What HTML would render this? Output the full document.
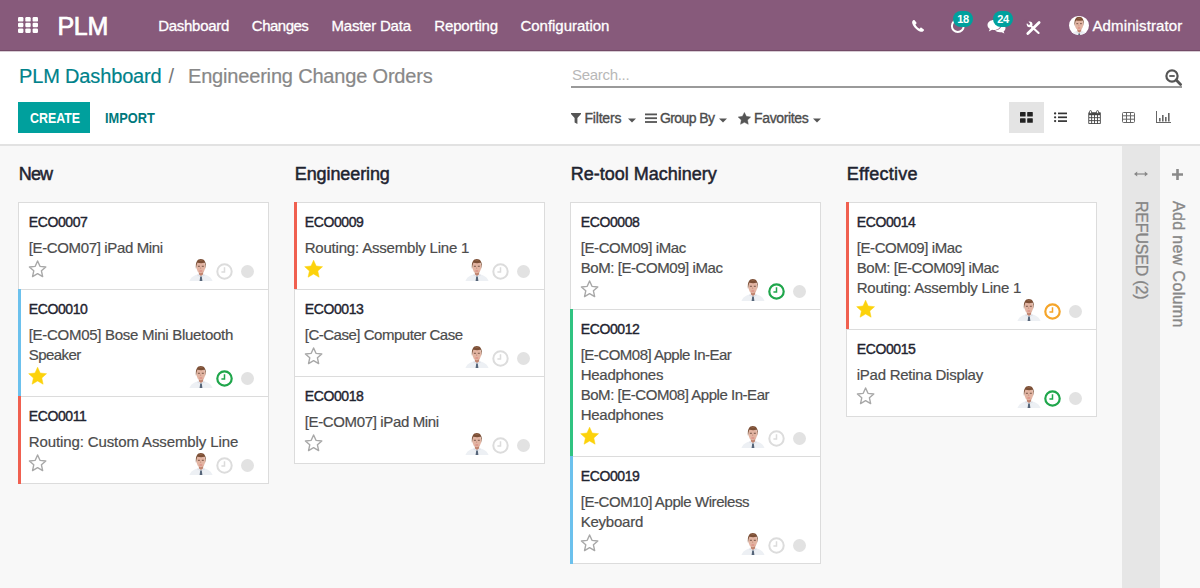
<!DOCTYPE html>
<html><head><meta charset="utf-8">
<style>
*{box-sizing:border-box;margin:0;padding:0}
html,body{width:1200px;height:588px;overflow:hidden;font-family:"Liberation Sans",sans-serif;background:#f8f8f8;position:relative}
.a{position:absolute;white-space:nowrap}
svg{position:absolute;overflow:visible}
</style></head><body>
<svg width="0" height="0" style="position:absolute">
<defs>
<symbol id="av" viewBox="0 0 24 23">
  <path d="M0.5,23 C1.5,19.5 5,17.2 9,16.2 L15,16.2 C19,17.2 22.5,19.5 23.5,23 Z" fill="#edf0f4"/>
  <path d="M9,16.2 L12,18.5 L15,16.2 L16,17.2 L12,19.5 L8,17.2 Z" fill="#dde1e8"/>
  <path d="M11.2,18.6 L12.8,18.6 L13.4,23 L10.6,23 Z" fill="#566579"/>
  <path d="M9.6,13 L14.4,13 L14,16.4 L12,18 L10,16.4 Z" fill="#c0846f"/>
  <ellipse cx="11.8" cy="9" rx="4.4" ry="6.2" fill="#e2b4a2"/>
  <path d="M7,11 C6.2,4 8.4,0.9 11.8,0.9 C15.4,0.9 17.6,4 16.8,11 C16.5,8 16.2,6 15.4,4.8 C13.4,5.4 10.4,5.3 8.6,4.8 C7.8,6 7.4,8 7,11 Z" fill="#7c4f36"/>
  <path d="M9.4,2.6 C10.8,1.8 13.2,1.8 14.6,2.8 C13.2,2.6 11,2.6 9.4,2.6 Z" fill="#a87a5c"/>
  <rect x="8.9" y="7.8" width="2" height="0.9" fill="#6a4a3e"/><rect x="12.8" y="7.8" width="2" height="0.9" fill="#6a4a3e"/>
  <path d="M11.4,8.5 L11,11 L12.4,11 Z" fill="#cf9a88"/>
  <rect x="10.3" y="12.4" width="3" height="1" rx="0.5" fill="#d9807a"/>
</symbol>
</defs></svg>

<div class="a" style="left:0;top:0;width:1200px;height:51px;background:#875a7b"></div>
<div class="a" style="left:0;top:50px;width:1200px;height:1px;background:#724a66"></div>
<div class="a" style="left:0;top:51px;width:1200px;height:1px;background:#d8ccd4"></div>
<svg style="left:18px;top:17px" width="20" height="16"><rect x="0.0" y="0.0" width="5.4" height="4.6" rx="1.2" fill="#fff"/><rect x="7.3" y="0.0" width="5.4" height="4.6" rx="1.2" fill="#fff"/><rect x="14.6" y="0.0" width="5.4" height="4.6" rx="1.2" fill="#fff"/><rect x="0.0" y="5.7" width="5.4" height="4.6" rx="1.2" fill="#fff"/><rect x="7.3" y="5.7" width="5.4" height="4.6" rx="1.2" fill="#fff"/><rect x="14.6" y="5.7" width="5.4" height="4.6" rx="1.2" fill="#fff"/><rect x="0.0" y="11.4" width="5.4" height="4.6" rx="1.2" fill="#fff"/><rect x="7.3" y="11.4" width="5.4" height="4.6" rx="1.2" fill="#fff"/><rect x="14.6" y="11.4" width="5.4" height="4.6" rx="1.2" fill="#fff"/></svg>
<div class="a" style="left:57.5px;top:13.54px;font-size:25px;line-height:25px;color:#fff;font-weight:400;letter-spacing:-0.3px;-webkit-text-stroke:0.7px #fff;">PLM</div>
<div class="a" style="left:158.3px;top:18.10px;font-size:15px;line-height:15px;color:#fff;font-weight:400;letter-spacing:-0.3px;-webkit-text-stroke:0.3px #fff;">Dashboard</div>
<div class="a" style="left:251.8px;top:18.10px;font-size:15px;line-height:15px;color:#fff;font-weight:400;letter-spacing:-0.5px;-webkit-text-stroke:0.3px #fff;">Changes</div>
<div class="a" style="left:331.5px;top:18.10px;font-size:15px;line-height:15px;color:#fff;font-weight:400;letter-spacing:-0.22px;-webkit-text-stroke:0.3px #fff;">Master Data</div>
<div class="a" style="left:434.3px;top:18.10px;font-size:15px;line-height:15px;color:#fff;font-weight:400;letter-spacing:-0.15px;-webkit-text-stroke:0.3px #fff;">Reporting</div>
<div class="a" style="left:520.5px;top:18.10px;font-size:15px;line-height:15px;color:#fff;font-weight:400;letter-spacing:-0.03px;-webkit-text-stroke:0.3px #fff;">Configuration</div>
<svg style="left:912px;top:20px" width="13" height="12" viewBox="0 0 13 12"><path d="M2.6,0.3 L4.4,2.6 C4.7,3 4.6,3.5 4.2,3.8 L3.4,4.4 C4.2,6.3 5.8,7.9 7.6,8.7 L8.3,7.9 C8.6,7.5 9.1,7.4 9.5,7.7 L11.8,9.4 C12.2,9.7 12.2,10.2 11.9,10.6 L10.9,11.5 C10,12.2 8,11.9 5.6,10.2 C3.2,8.5 1.2,6 0.4,3.8 C-0.1,2.4 0.2,1.3 0.9,0.6 L1.6,0.1 C1.9,-0.1 2.3,0 2.6,0.3 Z" fill="#fff"/></svg>
<svg style="left:950px;top:19px" width="16" height="14" viewBox="0 0 16 14"><circle cx="7.8" cy="7" r="5.9" fill="none" stroke="#fff" stroke-width="2"/></svg>
<div class="a" style="left:953px;top:11px;width:20px;height:16px;border-radius:8px;background:#00a09d;color:#fff;font-size:11px;font-weight:700;line-height:16px;text-align:center;letter-spacing:-0.4px">18</div>
<svg style="left:987px;top:19px" width="19" height="15" viewBox="0 0 19 15"><path d="M7,1 C3.2,1 0.5,3.2 0.5,6 C0.5,7.6 1.4,9 2.8,9.9 L1.8,12.5 L5.2,10.8 C5.8,10.9 6.4,11 7,11 C10.8,11 13.5,8.8 13.5,6 C13.5,3.2 10.8,1 7,1 Z" fill="#fff"/><path d="M14.5,4.5 C17,5.3 18.5,7 18.5,9 C18.5,10.4 17.8,11.6 16.6,12.4 L17.4,14.6 L14.6,13.2 C14.1,13.3 13.6,13.3 13,13.3 C10.8,13.3 8.9,12.4 7.9,11.6 C11.6,11.4 14.5,8.9 14.5,5.8 Z" fill="#fff"/></svg>
<div class="a" style="left:993px;top:11px;width:20px;height:16px;border-radius:8px;background:#00a09d;color:#fff;font-size:11px;font-weight:700;line-height:16px;text-align:center;letter-spacing:-0.4px">24</div>
<svg style="left:1024px;top:18px" width="20" height="20" viewBox="0 0 20 20"><path d="M7.5,8.5 L14.6,15" stroke="#fff" stroke-width="2.1" stroke-linecap="round"/><circle cx="5.6" cy="6.3" r="2.85" fill="#fff"/><path d="M5.0,5.8 L1.8,2.6" stroke="#875a7b" stroke-width="2.1" stroke-linecap="round"/><path d="M15.1,4.4 L3.8,15.6" stroke="#fff" stroke-width="2.8" stroke-linecap="round"/></svg>
<div class="a" style="left:1069px;top:15.5px;width:19.5px;height:19.5px;border-radius:50%;background:#fff;overflow:hidden"><svg style="left:-1.5px;top:0.5px" width="22.5" height="21.5"><use href="#av"/></svg></div>
<div class="a" style="left:1092.5px;top:18.40px;font-size:15px;line-height:15px;color:#fff;font-weight:400;letter-spacing:0.12px;-webkit-text-stroke:0.3px #fff;">Administrator</div>
<div class="a" style="left:0;top:52px;width:1200px;height:93px;background:#fff"></div>
<div class="a" style="left:0;top:144px;width:1200px;height:2px;background:#e2e2e2"></div>
<div class="a" style="left:19.0px;top:66.17px;font-size:20px;line-height:20px;color:#00828a;font-weight:400;letter-spacing:-0.15px;-webkit-text-stroke:0.2px #00828a;">PLM Dashboard</div>
<div class="a" style="left:168.5px;top:66.17px;font-size:20px;line-height:20px;color:#777;font-weight:400;letter-spacing:0px;">/</div>
<div class="a" style="left:188.0px;top:66.17px;font-size:20px;line-height:20px;color:#888;font-weight:400;letter-spacing:-0.18px;-webkit-text-stroke:0.2px #888;">Engineering Change Orders</div>
<div class="a" style="left:18px;top:102px;width:72px;height:31px;background:#00a09d"></div>
<div class="a" style="left:29.5px;top:111.45px;font-size:14px;line-height:14px;color:#fff;font-weight:700;letter-spacing:0px;transform:scaleX(0.885);transform-origin:0 0;">CREATE</div>
<div class="a" style="left:105.0px;top:111.45px;font-size:14px;line-height:14px;color:#00787c;font-weight:700;letter-spacing:0px;transform:scaleX(0.915);transform-origin:0 0;">IMPORT</div>
<div class="a" style="left:572.0px;top:66.50px;font-size:15px;line-height:15px;color:#b8b8b8;font-weight:400;letter-spacing:-0.3px;">Search...</div>
<div class="a" style="left:571px;top:86px;width:611px;height:1.5px;background:#9a9a9a"></div>
<svg style="left:1165px;top:69px" width="18" height="17" viewBox="0 0 18 17"><circle cx="7" cy="7" r="5.6" fill="none" stroke="#555" stroke-width="2.2"/><path d="M4.3,7 L9.7,7" stroke="#555" stroke-width="1.8"/><path d="M11.2,11 L15.6,15.4" stroke="#555" stroke-width="2.8" stroke-linecap="round"/></svg>
<svg style="left:571px;top:113px" width="10" height="11" viewBox="0 0 10 11"><path d="M0,0 L10,0 L10,1 L6.4,5 L6.4,11 L3.6,9.4 L3.6,5 L0,1 Z" fill="#555"/></svg>
<div class="a" style="left:584.5px;top:110.85px;font-size:14px;line-height:14px;color:#4c4c4c;font-weight:400;letter-spacing:-0.2px;-webkit-text-stroke:0.35px #4c4c4c;">Filters</div>
<svg style="left:628px;top:117.5px" width="8" height="5" viewBox="0 0 8 5"><path d="M0,0.5 L8,0.5 L4,4.5 Z" fill="#555"/></svg>
<svg style="left:645px;top:113px" width="12" height="10" viewBox="0 0 12 10"><rect x="0" y="0.5" width="12" height="1.8" fill="#555"/><rect x="0" y="4.3" width="12" height="1.8" fill="#555"/><rect x="0" y="8.1" width="12" height="1.8" fill="#555"/></svg>
<div class="a" style="left:660.0px;top:110.85px;font-size:14px;line-height:14px;color:#4c4c4c;font-weight:400;letter-spacing:-0.6px;-webkit-text-stroke:0.35px #4c4c4c;">Group By</div>
<svg style="left:719px;top:117.5px" width="8" height="5" viewBox="0 0 8 5"><path d="M0,0.5 L8,0.5 L4,4.5 Z" fill="#555"/></svg>
<svg style="left:737.5px;top:111.5px" width="13" height="13" viewBox="0 0 13 13"><polygon points="6.40,0.40 8.34,4.33 12.68,4.96 9.54,8.02 10.28,12.34 6.40,10.30 2.52,12.34 3.26,8.02 0.12,4.96 4.46,4.33" fill="#555" stroke="#555" stroke-width="0.4" stroke-linejoin="round"/></svg>
<div class="a" style="left:754.0px;top:110.85px;font-size:14px;line-height:14px;color:#4c4c4c;font-weight:400;letter-spacing:-0.35px;-webkit-text-stroke:0.35px #4c4c4c;">Favorites</div>
<svg style="left:813px;top:117.5px" width="8" height="5" viewBox="0 0 8 5"><path d="M0,0.5 L8,0.5 L4,4.5 Z" fill="#555"/></svg>
<div class="a" style="left:1009px;top:102px;width:35px;height:31px;background:#e4e4e4"></div>
<svg style="left:1020px;top:111.5px" width="13" height="11" viewBox="0 0 13 11"><g fill="#222"><rect x="0" y="0" width="5.6" height="4.6" rx="0.6"/><rect x="7.2" y="0" width="5.6" height="4.6" rx="0.6"/><rect x="0" y="6.2" width="5.6" height="4.6" rx="0.6"/><rect x="7.2" y="6.2" width="5.6" height="4.6" rx="0.6"/></g></svg>
<svg style="left:1053px;top:111px" width="15" height="12" viewBox="0 0 15 12"><g fill="#333"><circle cx="2.1" cy="2.4" r="1.15"/><circle cx="2.1" cy="6.3" r="1.15"/><circle cx="2.1" cy="10.1" r="1.15"/><rect x="5" y="1.55" width="9" height="1.7"/><rect x="5" y="5.45" width="9" height="1.7"/><rect x="5" y="9.25" width="9" height="1.7"/></g></svg>
<svg style="left:1088px;top:110px" width="13" height="14" viewBox="0 0 13 14"><rect x="0.3" y="2.3" width="12.5" height="11.7" rx="0.8" fill="#444"/><rect x="1.20" y="5.20" width="2.0" height="2.05" fill="#fff"/><rect x="1.20" y="8.15" width="2.0" height="2.05" fill="#fff"/><rect x="1.20" y="11.10" width="2.0" height="2.05" fill="#fff"/><rect x="4.10" y="5.20" width="2.0" height="2.05" fill="#fff"/><rect x="4.10" y="8.15" width="2.0" height="2.05" fill="#fff"/><rect x="4.10" y="11.10" width="2.0" height="2.05" fill="#fff"/><rect x="7.00" y="5.20" width="2.0" height="2.05" fill="#fff"/><rect x="7.00" y="8.15" width="2.0" height="2.05" fill="#fff"/><rect x="7.00" y="11.10" width="2.0" height="2.05" fill="#fff"/><rect x="9.90" y="5.20" width="2.0" height="2.05" fill="#fff"/><rect x="9.90" y="8.15" width="2.0" height="2.05" fill="#fff"/><rect x="9.90" y="11.10" width="2.0" height="2.05" fill="#fff"/><rect x="1.6" y="0.6" width="1.9" height="3" rx="0.9" fill="#fff" stroke="#444" stroke-width="0.9"/><rect x="8.6" y="0.6" width="1.9" height="3" rx="0.9" fill="#fff" stroke="#444" stroke-width="0.9"/></svg>
<svg style="left:1122px;top:111.5px" width="13" height="11" viewBox="0 0 13 11"><g fill="none" stroke="#666" stroke-width="1"><rect x="0.5" y="0.5" width="12" height="10" rx="1"/><path d="M0.5,3.8 H12.5 M0.5,7.2 H12.5 M4.5,0.5 V10.5 M8.5,0.5 V10.5"/></g></svg>
<svg style="left:1156px;top:111px" width="15" height="12" viewBox="0 0 15 12"><g fill="#666"><rect x="0" y="0" width="1" height="12"/><rect x="0" y="11" width="15" height="1"/><rect x="3" y="7" width="1.6" height="3.5"/><rect x="6" y="4" width="1.6" height="6.5"/><rect x="9" y="6" width="1.6" height="4.5"/><rect x="12" y="2" width="1.6" height="8.5"/></g></svg>
<div class="a" style="left:18.8px;top:164.96px;font-size:18px;line-height:18px;color:#1f2430;font-weight:400;letter-spacing:-0.9px;-webkit-text-stroke:0.5px #1f2430;">New</div>
<div class="a" style="left:18px;top:202px;width:251px;height:88px;background:#fff;border:1px solid #dcdcdc"></div>
<div class="a" style="left:28.8px;top:214.95px;font-size:14px;line-height:14px;color:#1f2430;font-weight:400;letter-spacing:-0.4px;-webkit-text-stroke:0.4px #1f2430;">ECO0007</div>
<div class="a" style="left:28.7px;top:240.30px;font-size:15px;line-height:15px;color:#4c4c4c;font-weight:400;letter-spacing:-0.356px;-webkit-text-stroke:0.2px #4c4c4c;">[E-COM07] iPad Mini</div>
<svg style="left:28px;top:259.7px" width="20" height="18"><polygon points="9.60,1.00 11.98,6.33 17.78,6.94 13.44,10.85 14.65,16.56 9.60,13.64 4.55,16.56 5.76,10.85 1.42,6.94 7.22,6.33" fill="none" stroke="#a8a8a8" stroke-width="1.4" stroke-linejoin="round"/></svg>
<svg style="left:189px;top:257.8px" width="24" height="23"><use href="#av"/></svg>
<svg style="left:216px;top:262.5px" width="17" height="17" viewBox="0 0 17 17"><circle cx="8.5" cy="8.5" r="7.2" fill="none" stroke="#dcdcdc" stroke-width="2.0"/><path d="M8.5,4.2 V9 H5.4" fill="none" stroke="#dcdcdc" stroke-width="1.5"/></svg>
<div class="a" style="left:240.9px;top:264.59999999999997px;width:13.2px;height:13.2px;border-radius:50%;background:#e2e2e2"></div>
<div class="a" style="left:18px;top:289px;width:251px;height:108px;background:#fff;border:1px solid #dcdcdc"></div>
<div class="a" style="left:18px;top:289px;width:3px;height:108px;background:#6cc1ed"></div>
<div class="a" style="left:28.8px;top:301.95px;font-size:14px;line-height:14px;color:#1f2430;font-weight:400;letter-spacing:-0.4px;-webkit-text-stroke:0.4px #1f2430;">ECO0010</div>
<div class="a" style="left:28.7px;top:327.30px;font-size:15px;line-height:15px;color:#4c4c4c;font-weight:400;letter-spacing:-0.286px;-webkit-text-stroke:0.2px #4c4c4c;">[E-COM05] Bose Mini Bluetooth</div>
<div class="a" style="left:28.7px;top:347.30px;font-size:15px;line-height:15px;color:#4c4c4c;font-weight:400;letter-spacing:-0.567px;-webkit-text-stroke:0.2px #4c4c4c;">Speaker</div>
<svg style="left:28px;top:366.7px" width="20" height="18"><polygon points="9.60,0.20 12.20,6.03 18.54,6.70 13.80,10.97 15.13,17.20 9.60,14.02 4.07,17.20 5.40,10.97 0.66,6.70 7.00,6.03" fill="#fcd20b" stroke="#fcd20b" stroke-width="0.5" stroke-linejoin="round"/></svg>
<svg style="left:189px;top:364.8px" width="24" height="23"><use href="#av"/></svg>
<svg style="left:216px;top:369.5px" width="17" height="17" viewBox="0 0 17 17"><circle cx="8.5" cy="8.5" r="7.2" fill="none" stroke="#1fa64b" stroke-width="2.2"/><path d="M8.5,4.2 V9 H5.4" fill="none" stroke="#1fa64b" stroke-width="1.5"/></svg>
<div class="a" style="left:240.9px;top:371.59999999999997px;width:13.2px;height:13.2px;border-radius:50%;background:#e2e2e2"></div>
<div class="a" style="left:18px;top:396px;width:251px;height:88px;background:#fff;border:1px solid #dcdcdc"></div>
<div class="a" style="left:18px;top:396px;width:3px;height:88px;background:#f06050"></div>
<div class="a" style="left:28.8px;top:408.95px;font-size:14px;line-height:14px;color:#1f2430;font-weight:400;letter-spacing:-0.4px;-webkit-text-stroke:0.4px #1f2430;">ECO0011</div>
<div class="a" style="left:28.7px;top:434.30px;font-size:15px;line-height:15px;color:#4c4c4c;font-weight:400;letter-spacing:-0.107px;-webkit-text-stroke:0.2px #4c4c4c;">Routing: Custom Assembly Line</div>
<svg style="left:28px;top:453.7px" width="20" height="18"><polygon points="9.60,1.00 11.98,6.33 17.78,6.94 13.44,10.85 14.65,16.56 9.60,13.64 4.55,16.56 5.76,10.85 1.42,6.94 7.22,6.33" fill="none" stroke="#a8a8a8" stroke-width="1.4" stroke-linejoin="round"/></svg>
<svg style="left:189px;top:451.8px" width="24" height="23"><use href="#av"/></svg>
<svg style="left:216px;top:456.5px" width="17" height="17" viewBox="0 0 17 17"><circle cx="8.5" cy="8.5" r="7.2" fill="none" stroke="#dcdcdc" stroke-width="2.0"/><path d="M8.5,4.2 V9 H5.4" fill="none" stroke="#dcdcdc" stroke-width="1.5"/></svg>
<div class="a" style="left:240.9px;top:458.59999999999997px;width:13.2px;height:13.2px;border-radius:50%;background:#e2e2e2"></div>
<div class="a" style="left:294.8px;top:164.96px;font-size:18px;line-height:18px;color:#1f2430;font-weight:400;letter-spacing:-0.1px;-webkit-text-stroke:0.5px #1f2430;">Engineering</div>
<div class="a" style="left:294px;top:202px;width:251px;height:88px;background:#fff;border:1px solid #dcdcdc"></div>
<div class="a" style="left:294px;top:202px;width:3px;height:88px;background:#f06050"></div>
<div class="a" style="left:304.8px;top:214.95px;font-size:14px;line-height:14px;color:#1f2430;font-weight:400;letter-spacing:-0.4px;-webkit-text-stroke:0.4px #1f2430;">ECO0009</div>
<div class="a" style="left:304.7px;top:240.30px;font-size:15px;line-height:15px;color:#4c4c4c;font-weight:400;letter-spacing:-0.196px;-webkit-text-stroke:0.2px #4c4c4c;">Routing: Assembly Line 1</div>
<svg style="left:304px;top:259.7px" width="20" height="18"><polygon points="9.60,0.20 12.20,6.03 18.54,6.70 13.80,10.97 15.13,17.20 9.60,14.02 4.07,17.20 5.40,10.97 0.66,6.70 7.00,6.03" fill="#fcd20b" stroke="#fcd20b" stroke-width="0.5" stroke-linejoin="round"/></svg>
<svg style="left:465px;top:257.8px" width="24" height="23"><use href="#av"/></svg>
<svg style="left:492px;top:262.5px" width="17" height="17" viewBox="0 0 17 17"><circle cx="8.5" cy="8.5" r="7.2" fill="none" stroke="#dcdcdc" stroke-width="2.0"/><path d="M8.5,4.2 V9 H5.4" fill="none" stroke="#dcdcdc" stroke-width="1.5"/></svg>
<div class="a" style="left:516.9px;top:264.59999999999997px;width:13.2px;height:13.2px;border-radius:50%;background:#e2e2e2"></div>
<div class="a" style="left:294px;top:289px;width:251px;height:88px;background:#fff;border:1px solid #dcdcdc"></div>
<div class="a" style="left:304.8px;top:301.95px;font-size:14px;line-height:14px;color:#1f2430;font-weight:400;letter-spacing:-0.4px;-webkit-text-stroke:0.4px #1f2430;">ECO0013</div>
<div class="a" style="left:304.7px;top:327.30px;font-size:15px;line-height:15px;color:#4c4c4c;font-weight:400;letter-spacing:-0.476px;-webkit-text-stroke:0.2px #4c4c4c;">[C-Case] Computer Case</div>
<svg style="left:304px;top:346.7px" width="20" height="18"><polygon points="9.60,1.00 11.98,6.33 17.78,6.94 13.44,10.85 14.65,16.56 9.60,13.64 4.55,16.56 5.76,10.85 1.42,6.94 7.22,6.33" fill="none" stroke="#a8a8a8" stroke-width="1.4" stroke-linejoin="round"/></svg>
<svg style="left:465px;top:344.8px" width="24" height="23"><use href="#av"/></svg>
<svg style="left:492px;top:349.5px" width="17" height="17" viewBox="0 0 17 17"><circle cx="8.5" cy="8.5" r="7.2" fill="none" stroke="#dcdcdc" stroke-width="2.0"/><path d="M8.5,4.2 V9 H5.4" fill="none" stroke="#dcdcdc" stroke-width="1.5"/></svg>
<div class="a" style="left:516.9px;top:351.59999999999997px;width:13.2px;height:13.2px;border-radius:50%;background:#e2e2e2"></div>
<div class="a" style="left:294px;top:376px;width:251px;height:88px;background:#fff;border:1px solid #dcdcdc"></div>
<div class="a" style="left:304.8px;top:388.95px;font-size:14px;line-height:14px;color:#1f2430;font-weight:400;letter-spacing:-0.4px;-webkit-text-stroke:0.4px #1f2430;">ECO0018</div>
<div class="a" style="left:304.7px;top:414.30px;font-size:15px;line-height:15px;color:#4c4c4c;font-weight:400;letter-spacing:-0.356px;-webkit-text-stroke:0.2px #4c4c4c;">[E-COM07] iPad Mini</div>
<svg style="left:304px;top:433.7px" width="20" height="18"><polygon points="9.60,1.00 11.98,6.33 17.78,6.94 13.44,10.85 14.65,16.56 9.60,13.64 4.55,16.56 5.76,10.85 1.42,6.94 7.22,6.33" fill="none" stroke="#a8a8a8" stroke-width="1.4" stroke-linejoin="round"/></svg>
<svg style="left:465px;top:431.8px" width="24" height="23"><use href="#av"/></svg>
<svg style="left:492px;top:436.5px" width="17" height="17" viewBox="0 0 17 17"><circle cx="8.5" cy="8.5" r="7.2" fill="none" stroke="#dcdcdc" stroke-width="2.0"/><path d="M8.5,4.2 V9 H5.4" fill="none" stroke="#dcdcdc" stroke-width="1.5"/></svg>
<div class="a" style="left:516.9px;top:438.59999999999997px;width:13.2px;height:13.2px;border-radius:50%;background:#e2e2e2"></div>
<div class="a" style="left:570.8px;top:164.96px;font-size:18px;line-height:18px;color:#1f2430;font-weight:400;letter-spacing:0.0px;-webkit-text-stroke:0.5px #1f2430;">Re-tool Machinery</div>
<div class="a" style="left:570px;top:202px;width:251px;height:108px;background:#fff;border:1px solid #dcdcdc"></div>
<div class="a" style="left:580.8px;top:214.95px;font-size:14px;line-height:14px;color:#1f2430;font-weight:400;letter-spacing:-0.4px;-webkit-text-stroke:0.4px #1f2430;">ECO0008</div>
<div class="a" style="left:580.7px;top:240.30px;font-size:15px;line-height:15px;color:#4c4c4c;font-weight:400;letter-spacing:-0.408px;-webkit-text-stroke:0.2px #4c4c4c;">[E-COM09] iMac</div>
<div class="a" style="left:580.7px;top:260.30px;font-size:15px;line-height:15px;color:#4c4c4c;font-weight:400;letter-spacing:-0.433px;-webkit-text-stroke:0.2px #4c4c4c;">BoM: [E-COM09] iMac</div>
<svg style="left:580px;top:279.7px" width="20" height="18"><polygon points="9.60,1.00 11.98,6.33 17.78,6.94 13.44,10.85 14.65,16.56 9.60,13.64 4.55,16.56 5.76,10.85 1.42,6.94 7.22,6.33" fill="none" stroke="#a8a8a8" stroke-width="1.4" stroke-linejoin="round"/></svg>
<svg style="left:741px;top:277.8px" width="24" height="23"><use href="#av"/></svg>
<svg style="left:768px;top:282.5px" width="17" height="17" viewBox="0 0 17 17"><circle cx="8.5" cy="8.5" r="7.2" fill="none" stroke="#1fa64b" stroke-width="2.2"/><path d="M8.5,4.2 V9 H5.4" fill="none" stroke="#1fa64b" stroke-width="1.5"/></svg>
<div class="a" style="left:792.9px;top:284.59999999999997px;width:13.2px;height:13.2px;border-radius:50%;background:#e2e2e2"></div>
<div class="a" style="left:570px;top:309px;width:251px;height:148px;background:#fff;border:1px solid #dcdcdc"></div>
<div class="a" style="left:570px;top:309px;width:3px;height:148px;background:#30c381"></div>
<div class="a" style="left:580.8px;top:321.95px;font-size:14px;line-height:14px;color:#1f2430;font-weight:400;letter-spacing:-0.4px;-webkit-text-stroke:0.4px #1f2430;">ECO0012</div>
<div class="a" style="left:580.7px;top:347.30px;font-size:15px;line-height:15px;color:#4c4c4c;font-weight:400;letter-spacing:-0.505px;-webkit-text-stroke:0.2px #4c4c4c;">[E-COM08] Apple In-Ear</div>
<div class="a" style="left:580.7px;top:367.30px;font-size:15px;line-height:15px;color:#4c4c4c;font-weight:400;letter-spacing:-0.256px;-webkit-text-stroke:0.2px #4c4c4c;">Headphones</div>
<div class="a" style="left:580.7px;top:387.30px;font-size:15px;line-height:15px;color:#4c4c4c;font-weight:400;letter-spacing:-0.465px;-webkit-text-stroke:0.2px #4c4c4c;">BoM: [E-COM08] Apple In-Ear</div>
<div class="a" style="left:580.7px;top:407.30px;font-size:15px;line-height:15px;color:#4c4c4c;font-weight:400;letter-spacing:-0.256px;-webkit-text-stroke:0.2px #4c4c4c;">Headphones</div>
<svg style="left:580px;top:426.7px" width="20" height="18"><polygon points="9.60,0.20 12.20,6.03 18.54,6.70 13.80,10.97 15.13,17.20 9.60,14.02 4.07,17.20 5.40,10.97 0.66,6.70 7.00,6.03" fill="#fcd20b" stroke="#fcd20b" stroke-width="0.5" stroke-linejoin="round"/></svg>
<svg style="left:741px;top:424.8px" width="24" height="23"><use href="#av"/></svg>
<svg style="left:768px;top:429.5px" width="17" height="17" viewBox="0 0 17 17"><circle cx="8.5" cy="8.5" r="7.2" fill="none" stroke="#dcdcdc" stroke-width="2.0"/><path d="M8.5,4.2 V9 H5.4" fill="none" stroke="#dcdcdc" stroke-width="1.5"/></svg>
<div class="a" style="left:792.9px;top:431.59999999999997px;width:13.2px;height:13.2px;border-radius:50%;background:#e2e2e2"></div>
<div class="a" style="left:570px;top:456px;width:251px;height:108px;background:#fff;border:1px solid #dcdcdc"></div>
<div class="a" style="left:570px;top:456px;width:3px;height:108px;background:#6cc1ed"></div>
<div class="a" style="left:580.8px;top:468.95px;font-size:14px;line-height:14px;color:#1f2430;font-weight:400;letter-spacing:-0.4px;-webkit-text-stroke:0.4px #1f2430;">ECO0019</div>
<div class="a" style="left:580.7px;top:494.30px;font-size:15px;line-height:15px;color:#4c4c4c;font-weight:400;letter-spacing:-0.417px;-webkit-text-stroke:0.2px #4c4c4c;">[E-COM10] Apple Wireless</div>
<div class="a" style="left:580.7px;top:514.30px;font-size:15px;line-height:15px;color:#4c4c4c;font-weight:400;letter-spacing:-0.229px;-webkit-text-stroke:0.2px #4c4c4c;">Keyboard</div>
<svg style="left:580px;top:533.7px" width="20" height="18"><polygon points="9.60,1.00 11.98,6.33 17.78,6.94 13.44,10.85 14.65,16.56 9.60,13.64 4.55,16.56 5.76,10.85 1.42,6.94 7.22,6.33" fill="none" stroke="#a8a8a8" stroke-width="1.4" stroke-linejoin="round"/></svg>
<svg style="left:741px;top:531.8px" width="24" height="23"><use href="#av"/></svg>
<svg style="left:768px;top:536.5px" width="17" height="17" viewBox="0 0 17 17"><circle cx="8.5" cy="8.5" r="7.2" fill="none" stroke="#dcdcdc" stroke-width="2.0"/><path d="M8.5,4.2 V9 H5.4" fill="none" stroke="#dcdcdc" stroke-width="1.5"/></svg>
<div class="a" style="left:792.9px;top:538.6px;width:13.2px;height:13.2px;border-radius:50%;background:#e2e2e2"></div>
<div class="a" style="left:846.8px;top:164.96px;font-size:18px;line-height:18px;color:#1f2430;font-weight:400;letter-spacing:0.25px;-webkit-text-stroke:0.5px #1f2430;">Effective</div>
<div class="a" style="left:846px;top:202px;width:251px;height:128px;background:#fff;border:1px solid #dcdcdc"></div>
<div class="a" style="left:846px;top:202px;width:3px;height:128px;background:#f06050"></div>
<div class="a" style="left:856.8px;top:214.95px;font-size:14px;line-height:14px;color:#1f2430;font-weight:400;letter-spacing:-0.4px;-webkit-text-stroke:0.4px #1f2430;">ECO0014</div>
<div class="a" style="left:856.7px;top:240.30px;font-size:15px;line-height:15px;color:#4c4c4c;font-weight:400;letter-spacing:-0.408px;-webkit-text-stroke:0.2px #4c4c4c;">[E-COM09] iMac</div>
<div class="a" style="left:856.7px;top:260.30px;font-size:15px;line-height:15px;color:#4c4c4c;font-weight:400;letter-spacing:-0.433px;-webkit-text-stroke:0.2px #4c4c4c;">BoM: [E-COM09] iMac</div>
<div class="a" style="left:856.7px;top:280.30px;font-size:15px;line-height:15px;color:#4c4c4c;font-weight:400;letter-spacing:-0.196px;-webkit-text-stroke:0.2px #4c4c4c;">Routing: Assembly Line 1</div>
<svg style="left:856px;top:299.7px" width="20" height="18"><polygon points="9.60,0.20 12.20,6.03 18.54,6.70 13.80,10.97 15.13,17.20 9.60,14.02 4.07,17.20 5.40,10.97 0.66,6.70 7.00,6.03" fill="#fcd20b" stroke="#fcd20b" stroke-width="0.5" stroke-linejoin="round"/></svg>
<svg style="left:1017px;top:297.8px" width="24" height="23"><use href="#av"/></svg>
<svg style="left:1044px;top:302.5px" width="17" height="17" viewBox="0 0 17 17"><circle cx="8.5" cy="8.5" r="7.2" fill="none" stroke="#f5a52a" stroke-width="2.2"/><path d="M8.5,4.2 V9 H5.4" fill="none" stroke="#f5a52a" stroke-width="1.5"/></svg>
<div class="a" style="left:1068.9px;top:304.59999999999997px;width:13.2px;height:13.2px;border-radius:50%;background:#e2e2e2"></div>
<div class="a" style="left:846px;top:329px;width:251px;height:88px;background:#fff;border:1px solid #dcdcdc"></div>
<div class="a" style="left:856.8px;top:341.95px;font-size:14px;line-height:14px;color:#1f2430;font-weight:400;letter-spacing:-0.4px;-webkit-text-stroke:0.4px #1f2430;">ECO0015</div>
<div class="a" style="left:856.7px;top:367.30px;font-size:15px;line-height:15px;color:#4c4c4c;font-weight:400;letter-spacing:-0.244px;-webkit-text-stroke:0.2px #4c4c4c;">iPad Retina Display</div>
<svg style="left:856px;top:386.7px" width="20" height="18"><polygon points="9.60,1.00 11.98,6.33 17.78,6.94 13.44,10.85 14.65,16.56 9.60,13.64 4.55,16.56 5.76,10.85 1.42,6.94 7.22,6.33" fill="none" stroke="#a8a8a8" stroke-width="1.4" stroke-linejoin="round"/></svg>
<svg style="left:1017px;top:384.8px" width="24" height="23"><use href="#av"/></svg>
<svg style="left:1044px;top:389.5px" width="17" height="17" viewBox="0 0 17 17"><circle cx="8.5" cy="8.5" r="7.2" fill="none" stroke="#1fa64b" stroke-width="2.2"/><path d="M8.5,4.2 V9 H5.4" fill="none" stroke="#1fa64b" stroke-width="1.5"/></svg>
<div class="a" style="left:1068.9px;top:391.59999999999997px;width:13.2px;height:13.2px;border-radius:50%;background:#e2e2e2"></div>
<div class="a" style="left:1122px;top:146px;width:38px;height:442px;background:#e6e6e6"></div>
<svg style="left:1134px;top:170px" width="14" height="8" viewBox="0 0 14 8"><path d="M1,4 H13" stroke="#888" stroke-width="1.2"/><path d="M0,4 L3.2,1.5 V6.5 Z M14,4 L10.8,1.5 V6.5 Z" fill="#888"/></svg>
<div class="a" style="left:1141px;top:200.5px;transform-origin:0 0;transform:rotate(90deg);font-size:16px;line-height:16px;color:#858585;font-weight:400;letter-spacing:-0.2px;margin-left:8px;-webkit-text-stroke:0.3px #858585">REFUSED (2)</div>
<svg style="left:1172px;top:168.5px" width="11" height="11" viewBox="0 0 11 11"><path d="M5.5,0 V11 M0,5.5 H11" stroke="#8a8a8a" stroke-width="2.6"/></svg>
<div class="a" style="left:1178px;top:200.5px;transform-origin:0 0;transform:rotate(90deg);font-size:16px;line-height:16px;color:#888;font-weight:400;letter-spacing:0.35px;margin-left:8px;-webkit-text-stroke:0.35px #888">Add new Column</div>
</body></html>
